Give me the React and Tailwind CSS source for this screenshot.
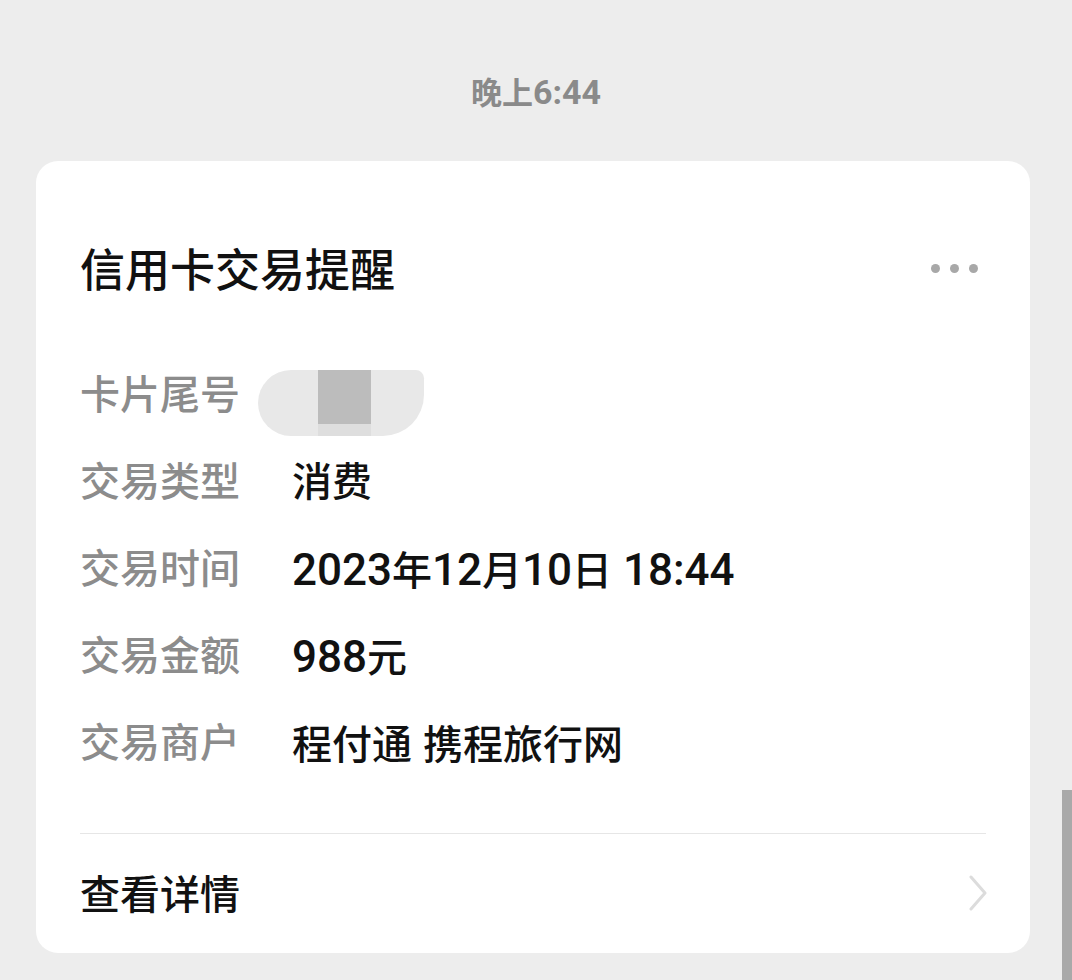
const rows = [
  { label: "交易类型", value: "消费" },
  { label: "交易时间", value: "2023年12月10日 18:44" },
  { label: "交易金额", value: "988元" },
  { label: "交易商户", value: "程付通 携程旅行网" },
];

// the phone font has wide, tall digits; Roboto a size up gets close
function Mixed({ text, digitClass }) {
  return text.split(/([0-9: ]+)/).map((part, i) =>
    /^[0-9: ]+$/.test(part) ? (
      <span key={i} className={digitClass}>
        {part}
      </span>
    ) : (
      <span key={i}>{part}</span>
    )
  );
}

function Row({ label, children }) {
  return (
    <div className="flex h-[87px] items-center">
      <div className="w-[212px] text-[40px] font-medium leading-none text-[#8c8c8c]">{label}</div>
      {children}
    </div>
  );
}

export default function App() {
  return (
    <div
      className="relative h-[980px] w-[1072px] overflow-hidden bg-[#ededed]"
      style={{ fontFamily: 'Roboto, "Noto Sans CJK SC", sans-serif' }}
    >
      <div className="flex h-[161px] items-start justify-center pt-[73px]">
        <span className="text-[31px] font-bold leading-[38px] text-[#8a8a8a]">
          <Mixed text="晚上6:44" digitClass="text-[34px]" />
        </span>
      </div>

      <div className="ml-[36px] h-[792px] w-[994px] rounded-[22px] bg-white px-[44px]">
        <div className="h-[191px] pt-[80px]">
          <div className="flex h-[60px] items-center justify-between">
            <span className="text-[45px] font-medium leading-none text-[#111]">信用卡交易提醒</span>
            <div className="-mt-[6px] mr-[8px] flex gap-[10px]">
              <span className="h-[9px] w-[9px] rounded-full bg-[#a8a8a8]" />
              <span className="h-[9px] w-[9px] rounded-full bg-[#a8a8a8]" />
              <span className="h-[9px] w-[9px] rounded-full bg-[#a8a8a8]" />
            </div>
          </div>
        </div>

        <Row label="卡片尾号">
          <div className="relative -ml-[34px] mt-[18px] h-[66px] w-[166px] self-start overflow-hidden rounded-l-[40px] rounded-br-[50px] rounded-tr-[10px] bg-[#e8e8e8]">
            <div className="absolute left-[60px] top-0 h-[54px] w-[53px] bg-[#bcbcbc]" />
            <div className="absolute left-[60px] top-[54px] h-[12px] w-[53px] bg-[#dedede]" />
          </div>
        </Row>
        {rows.map((r) => (
          <Row key={r.label} label={r.label}>
            <div className="text-[40px] font-medium leading-none text-[#111]">
              <Mixed text={r.value} digitClass="text-[44px]" />
            </div>
          </Row>
        ))}

        <div className="mt-[46px] h-px bg-[#e6e6e6]" />
        <div className="flex h-[118px] items-center justify-between pt-[6px]">
          <span className="text-[40px] font-medium leading-none text-[#111]">查看详情</span>
          <svg width="20" height="36" viewBox="0 0 20 36" className="-mr-[2px] -mt-[6px]">
            <path d="M3 2 L17 18 L3 34" fill="none" stroke="#dcdcdc" strokeWidth="3" strokeLinecap="round" strokeLinejoin="round" />
          </svg>
        </div>
      </div>

      <div className="absolute bottom-0 right-0 h-[190px] w-[10px] bg-[#a9a9a9]" />
    </div>
  );
}
